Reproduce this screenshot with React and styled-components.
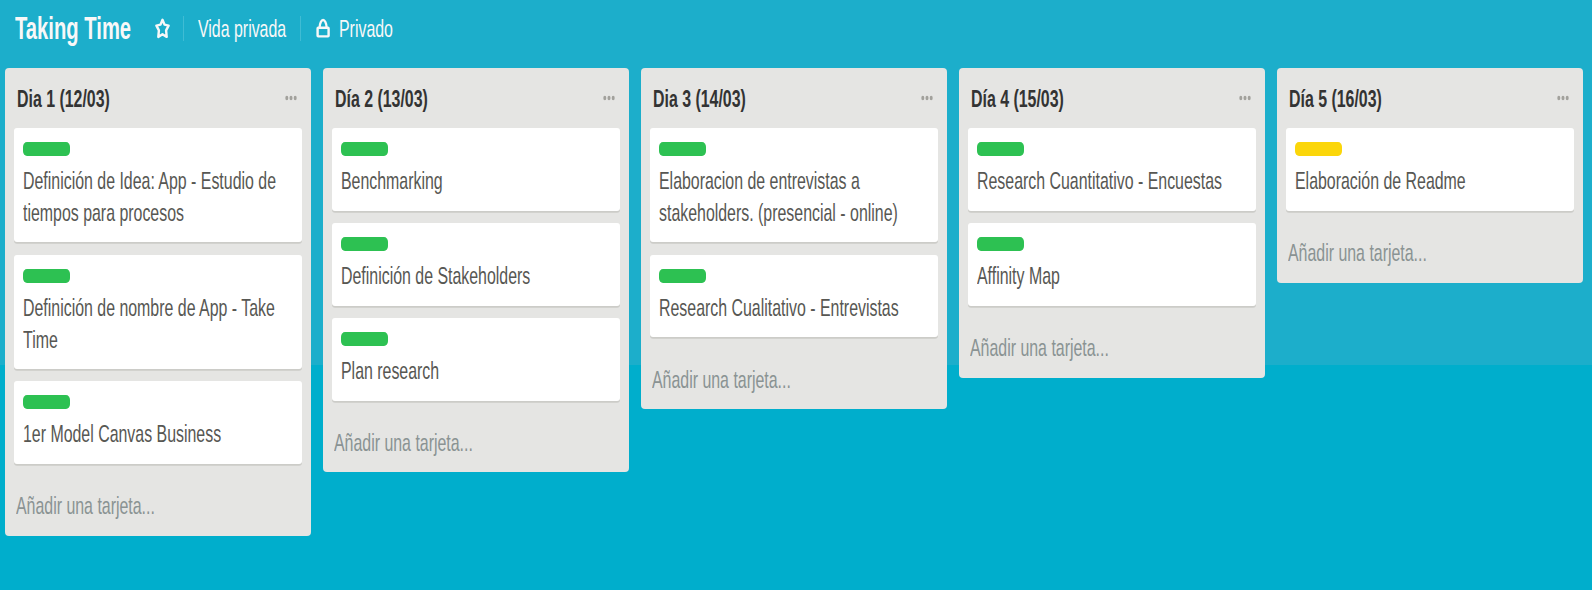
import React from "react";
import styled, { createGlobalStyle } from "styled-components";

const Global = createGlobalStyle`
  *, *::before, *::after { box-sizing: border-box; }
  html, body { margin: 0; padding: 0; background: #00aecc; overflow: hidden; }
  body { font-family: "Liberation Sans", Arial, sans-serif; }
`;

const Board = styled.div`
  display: flex;
  flex-direction: column;
  width: 1592px;
  height: 590px;
  background: linear-gradient(to bottom, #1caecb 0, #1caecb 365px, #00aecc 365px);
  overflow: hidden;
`;

const Header = styled.header`
  display: flex;
  align-items: center;
  flex: none;
  height: 56px;
  padding-left: 15px;
  color: #f8f8f8;
`;

/* Condensed lettering: the inner text is narrowed towards its left edge. */
const Condensed = styled.span`
  display: block;
  width: ${(p) => 100 / (p.$ratio || 0.647)}%;
  white-space: ${(p) => (p.$wrap ? "normal" : "nowrap")};
  transform: scaleX(${(p) => p.$ratio || 0.647});
  transform-origin: 0 0;
`;

const BoardTitle = styled.h1`
  width: 140px;
  margin: 0;
  font-size: 31.6px;
  font-weight: 700;
  line-height: 36px;
`;

const HeaderText = styled.div`
  width: ${(p) => p.$width}px;
  font-size: 24.6px;
  line-height: 32px;
  padding-top: 1px;
`;

const Divider = styled.i`
  width: 1px;
  height: 25px;
  margin-right: ${(p) => p.$gap}px;
  background: #3fbcd4;
`;

const StarIcon = styled.svg`
  width: 15px;
  height: 21px;
  margin-right: 13px;
`;

const LockIcon = styled.svg`
  width: 14px;
  height: 20px;
  margin: 0 9px 1px 0;
`;

const Lists = styled.main`
  display: flex;
  align-items: flex-start;
  gap: 11.4px;
  padding: 12.4px 0 0 4.6px;
`;

const List = styled.section`
  flex: none;
  width: 306.6px;
  padding: 0 9px;
  border-radius: 4px;
  background: #e5e5e3;
`;

const ListHeader = styled.div`
  display: flex;
  justify-content: space-between;
  height: 59.7px;
  padding: 14.4px 5px 0 3.5px;
`;

const ListTitle = styled.h2`
  width: 150px;
  margin: 0;
  color: #333;
  font-size: 24.6px;
  font-weight: 700;
  line-height: 31.6px;
`;

const Menu = styled.svg`
  width: 12px;
  height: 6px;
  margin-top: 12.6px;
`;

const Cards = styled.div`
  display: flex;
  flex-direction: column;
  gap: 12.3px;
`;

const Card = styled.article`
  padding: 14px 9px 13.8px;
  border-radius: 3px;
  background: #fff;
  box-shadow: 0 1.7px 0 #ccccc8;
`;

const Label = styled.div`
  width: 47.6px;
  height: 14.1px;
  margin-bottom: 9.2px;
  border-radius: 4px / 5px;
  background: ${(p) => p.$color};
`;

const CardText = styled.div`
  color: #575753;
  font-size: 24.6px;
  line-height: 31.6px;
`;

const AddCard = styled.div`
  height: 71.8px;
  padding: 26.4px 0 0 2px;
  color: #8a9393;
  font-size: 24.6px;
  line-height: 31.6px;
`;

const GREEN = "#2dc152";
const YELLOW = "#fbd60a";

const lists = [
  {
    title: "Dia 1 (12/03)",
    color: GREEN,
    cards: [
      "Definición de Idea: App - Estudio de tiempos para procesos",
      "Definición de nombre de App - Take Time",
      "1er Model Canvas Business",
    ],
  },
  {
    title: "Día 2 (13/03)",
    color: GREEN,
    cards: ["Benchmarking", "Definición de Stakeholders", "Plan research"],
  },
  {
    title: "Dia 3 (14/03)",
    color: GREEN,
    cards: [
      "Elaboracion de entrevistas a stakeholders. (presencial - online)",
      "Research Cualitativo - Entrevistas",
    ],
  },
  {
    title: "Día 4 (15/03)",
    color: GREEN,
    cards: ["Research Cuantitativo - Encuestas", "Affinity Map"],
  },
  { title: "Día 5 (16/03)", color: YELLOW, cards: ["Elaboración de Readme"] },
];

export default function App() {
  return (
    <>
      <Global />
      <Board>
        <Header>
          <BoardTitle>
            <Condensed $ratio={0.64}>Taking Time</Condensed>
          </BoardTitle>
          <StarIcon viewBox="0 0 15 21" fill="none" stroke="#f8f8f8" strokeWidth="2.4" strokeLinejoin="round">
            <path d="M7.5 1.8 9.5 6.6 13.6 7.6 11.1 12.4 11.7 18.9 7.5 16.2 3.3 18.9 3.9 12.4 1.4 7.6 5.5 6.6Z" />
          </StarIcon>
          <Divider $gap={13.5} />
          <HeaderText $width={102}>
            <Condensed>Vida privada</Condensed>
          </HeaderText>
          <Divider $gap={15.5} />
          <LockIcon viewBox="0 0 14 20" fill="none" stroke="#f8f8f8" strokeWidth="2.3">
            <path d="M3.6 9.6C3.8 5 5.5 2 7.1 2S10.4 5 10.6 9.6" />
            <rect x="1.6" y="9.8" width="11" height="8.6" rx="0.6" strokeWidth="2.4" />
          </LockIcon>
          <HeaderText $width={60}>
            <Condensed>Privado</Condensed>
          </HeaderText>
        </Header>
        <Lists>
          {lists.map((list) => (
            <List key={list.title}>
              <ListHeader>
                <ListTitle>
                  <Condensed>{list.title}</Condensed>
                </ListTitle>
                <Menu viewBox="0 0 12 6" fill="#a2a19c">
                  <ellipse cx="1.8" cy="3" rx="1.5" ry="2.2" />
                  <ellipse cx="6" cy="3" rx="1.5" ry="2.2" />
                  <ellipse cx="10.2" cy="3" rx="1.5" ry="2.2" />
                </Menu>
              </ListHeader>
              <Cards>
                {list.cards.map((text) => (
                  <Card key={text}>
                    <Label $color={list.color} />
                    <CardText>
                      <Condensed $wrap>{text}</Condensed>
                    </CardText>
                  </Card>
                ))}
              </Cards>
              <AddCard>
                <Condensed>Añadir una tarjeta...</Condensed>
              </AddCard>
            </List>
          ))}
        </Lists>
      </Board>
    </>
  );
}
